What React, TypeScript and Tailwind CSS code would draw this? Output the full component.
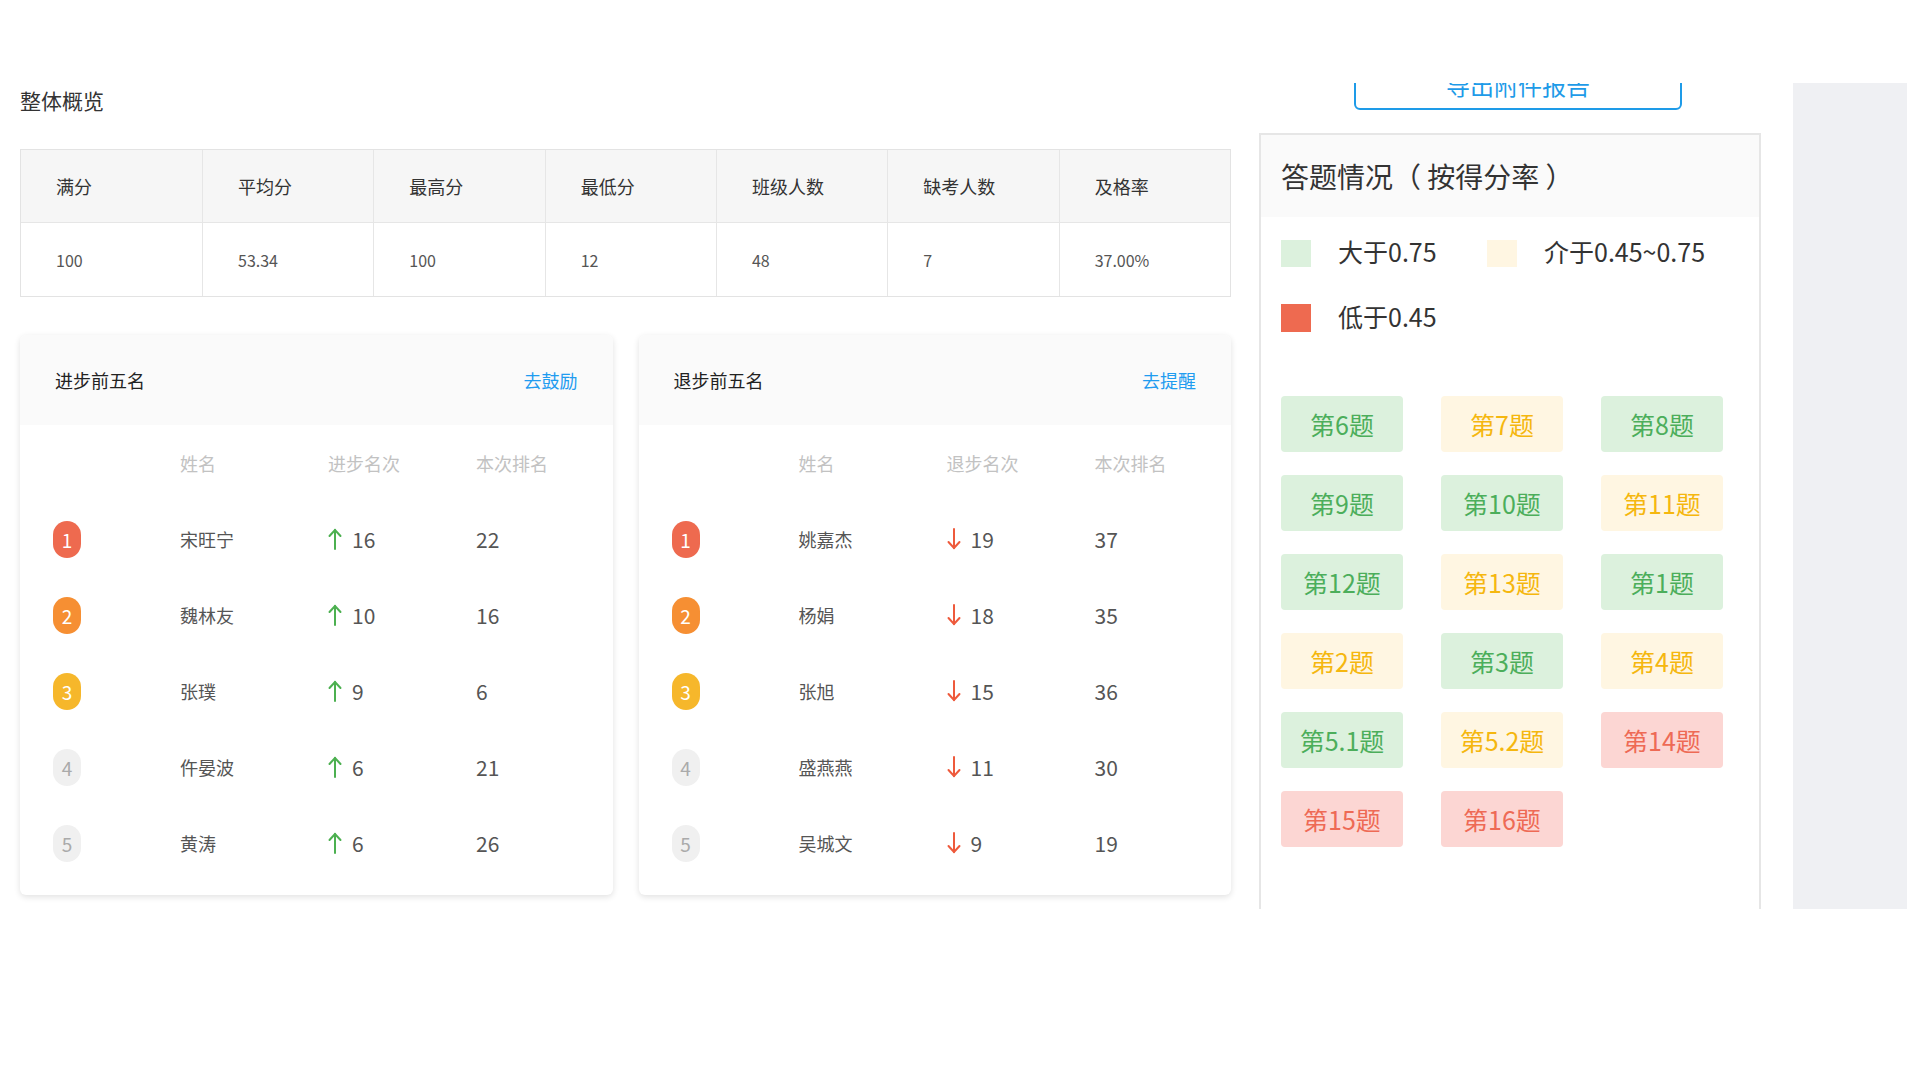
import React from "react";

type Row = { name: string; delta: number; rank: number };

const upList: Row[] = [
  { name: "宋旺宁", delta: 16, rank: 22 },
  { name: "魏林友", delta: 10, rank: 16 },
  { name: "张璞", delta: 9, rank: 6 },
  { name: "仵晏波", delta: 6, rank: 21 },
  { name: "黄涛", delta: 6, rank: 26 },
];

const downList: Row[] = [
  { name: "姚嘉杰", delta: 19, rank: 37 },
  { name: "杨娟", delta: 18, rank: 35 },
  { name: "张旭", delta: 15, rank: 36 },
  { name: "盛燕燕", delta: 11, rank: 30 },
  { name: "吴城文", delta: 9, rank: 19 },
];

const badgeCls = [
  "bg-[#ee6a4f] text-white",
  "bg-[#f68f33] text-white",
  "bg-[#f6b72b] text-white",
  "bg-[#f0f0f0] text-[#aaaaaa]",
  "bg-[#f0f0f0] text-[#aaaaaa]",
];

const chipCls: Record<string, string> = {
  g: "bg-[#dcf1dd] text-[#4cae5b]",
  y: "bg-[#fff6e2] text-[#f5b70f]",
  r: "bg-[#fcd6d3] text-[#ee6a55]",
};

const chips: [string, string][] = [
  ["第6题", "g"], ["第7题", "y"], ["第8题", "g"],
  ["第9题", "g"], ["第10题", "g"], ["第11题", "y"],
  ["第12题", "g"], ["第13题", "y"], ["第1题", "g"],
  ["第2题", "y"], ["第3题", "g"], ["第4题", "y"],
  ["第5.1题", "g"], ["第5.2题", "y"], ["第14题", "r"],
  ["第15题", "r"], ["第16题", "r"],
];

const stats = [
  ["满分", "100"],
  ["平均分", "53.34"],
  ["最高分", "100"],
  ["最低分", "12"],
  ["班级人数", "48"],
  ["缺考人数", "7"],
  ["及格率", "37.00%"],
];

function Arrow({ up }: { up: boolean }) {
  const color = up ? "#4cb050" : "#ee5a3c";
  return (
    <svg width="14" height="22" viewBox="0 0 14 22" fill="none" stroke={color} strokeWidth="2" strokeLinecap="round">
      {up ? (
        <>
          <path d="M7 2v19" />
          <path d="M1.5 8L7 2l5.5 6" />
        </>
      ) : (
        <>
          <path d="M7 1v19" />
          <path d="M1.5 14L7 20l5.5-6" />
        </>
      )}
    </svg>
  );
}

function RankCard({ title, link, col, list, up }: { title: string; link: string; col: string; list: Row[]; up: boolean }) {
  return (
    <div className="flex-1 h-[560px] bg-white rounded-md shadow-[0_2px_6px_rgba(0,0,0,0.12)] overflow-hidden">
      <div className="h-[90px] bg-[#fafafa] px-[35px] flex items-center justify-between">
        <span className="text-[18px] text-[#222]">{title}</span>
        <span className="text-[18px] text-[#1f9cf0] cursor-pointer">{link}</span>
      </div>
      <div className="h-[76px] flex items-center pl-[33px] text-[18px] text-[#c2c2c2]">
        <span className="w-[127px]"></span>
        <span className="w-[148px]">姓名</span>
        <span className="w-[148px]">{col}</span>
        <span>本次排名</span>
      </div>
      {list.map((r, i) => (
        <div key={r.name} className="h-[76px] flex items-center pl-[33px]">
          <span className="w-[127px]">
            <span className={`w-[28px] h-[37px] rounded-full flex items-center justify-center text-[19px] ${badgeCls[i]}`}>
              {i + 1}
            </span>
          </span>
          <span className="w-[148px] text-[18px] text-[#555]">{r.name}</span>
          <span className="w-[148px] flex items-center gap-[10px] text-[21px] text-[#555]">
            <Arrow up={up} />
            {r.delta}
          </span>
          <span className="text-[21px] text-[#555]">{r.rank}</span>
        </div>
      ))}
    </div>
  );
}

export default function App() {
  return (
    <div className="w-full h-[1080px] bg-white font-['Noto_Sans_CJK_SC','Noto_Sans',sans-serif] leading-none">
      <div className="h-[83px]"></div>
      <div className="h-[826px] overflow-hidden flex">
        <div className="w-[1211px] ml-[20px] shrink-0">
          <div className="h-[34px] flex items-center text-[21px] text-[#333]">整体概览</div>
          <div className="mt-[32px] border border-[#e3e3e3] flex">
            {stats.map(([k, v], i) => (
              <div key={k} className={`${i === 0 ? "w-[181px]" : "flex-1"} ${i > 0 ? "border-l border-[#e6e6e6]" : ""}`}>
                <div className="h-[73px] bg-[#f6f6f6] border-b border-[#e6e6e6] flex items-center pl-[35px] text-[18px] text-[#333]">
                  {k}
                </div>
                <div className="h-[73px] flex items-center pl-[35px] text-[16px] text-[#555]">{v}</div>
              </div>
            ))}
          </div>
          <div className="mt-[38px] flex gap-[26px]">
            <RankCard title="进步前五名" link="去鼓励" col="进步名次" list={upList} up={true} />
            <RankCard title="退步前五名" link="去提醒" col="退步名次" list={downList} up={false} />
          </div>
        </div>

        <div className="w-[502px] ml-[28px] shrink-0">
          <div className="ml-[95px] w-[328px] h-[50px] -mt-[23px] border-2 border-[#1e9be8] rounded-md flex items-center justify-center text-[24px] text-[#1e9be8]">
            导出附件报告
          </div>
          <div className="mt-[23px] h-[900px] border-2 border-[#e6e6e6]">
            <div className="h-[82px] bg-[#fafafa] flex items-center pl-[20px] text-[28px] text-[#333]">
              答题情况（ 按得分率 ）
            </div>
            <div className="pt-[23px] pl-[20px]">
              <div className="flex items-center h-[27px]">
                <span className="w-[30px] h-[27px] bg-[#dcf1dd]"></span>
                <span className="ml-[27px] w-[149px] text-[25px] text-[#333] -mt-[4px]">大于0.75</span>
                <span className="w-[30px] h-[27px] bg-[#fff6e2]"></span>
                <span className="ml-[27px] text-[25px] text-[#333] -mt-[4px]">介于0.45~0.75</span>
              </div>
              <div className="flex items-center h-[28px] mt-[37px]">
                <span className="w-[30px] h-[28px] bg-[#ee6a50]"></span>
                <span className="ml-[27px] text-[25px] text-[#333] -mt-[4px]">低于0.45</span>
              </div>
              <div className="mt-[64px] grid grid-cols-[122px_122px_122px] gap-x-[38px] gap-y-[23px]">
                {chips.map(([label, c]) => (
                  <div key={label} className={`h-[56px] rounded-[4px] flex items-center justify-center text-[25px] ${chipCls[c]}`}>
                    {label}
                  </div>
                ))}
              </div>
            </div>
          </div>
        </div>

        <div className="w-[114px] ml-[32px] h-full bg-[#eff0f3] shrink-0"></div>
      </div>
    </div>
  );
}
